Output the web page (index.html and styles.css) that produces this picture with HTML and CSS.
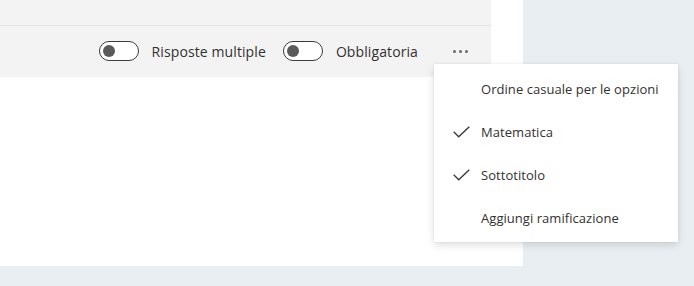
FILE: index.html
```html
<!DOCTYPE html>
<html lang="it">
<head>
  <meta charset="UTF-8">
  <title>Domanda</title>
  <link rel="stylesheet" href="styles.css">
</head>
<body>
<div class="page">
  <div class="card">
    <div class="question">
      <div class="question-top"></div>
      <div class="toolbar">
        <div class="toggle"><span class="toggle-thumb"></span></div>
        <span class="toggle-label">Risposte multiple</span>
        <div class="toggle"><span class="toggle-thumb"></span></div>
        <span class="toggle-label">Obbligatoria</span>
        <button class="more" type="button">
          <span></span><span></span><span></span>
        </button>
      </div>
    </div>
  </div>

  <ul class="menu">
    <li><span class="check"></span>Ordine casuale per le opzioni</li>
    <li>
      <span class="check">
        <svg width="17" height="12" viewBox="0 0 17 12"><polyline points="0.7,5.8 5.7,10.8 16.3,0.7" fill="none" stroke="#3b3b3b" stroke-width="1.4"/></svg>
      </span>Matematica
    </li>
    <li>
      <span class="check">
        <svg width="17" height="12" viewBox="0 0 17 12"><polyline points="0.7,5.8 5.7,10.8 16.3,0.7" fill="none" stroke="#3b3b3b" stroke-width="1.4"/></svg>
      </span>Sottotitolo
    </li>
    <li><span class="check"></span>Aggiungi ramificazione</li>
  </ul>
</div>
</body>
</html>
```

FILE: styles.css
```css
* {
  margin: 0;
  padding: 0;
  box-sizing: border-box;
}
body {
  background-color: #e8eef1;
  font-family: "Open Sans", "Noto Sans", sans-serif;
  font-size: 13px;
  color: #323130;
}
.page {
  position: relative;
  width: 694px;
  height: 286px;
}
.card {
  width: 523px;
  height: 266px;
  background-color: #fff;
}
.question {
  width: 491px;
  background-color: #f3f3f3;
}
.question-top {
  height: 26px;
  border-bottom: 1px solid #e3e3e3;
}
.toolbar {
  height: 51px;
  display: flex;
  align-items: center;
  justify-content: flex-end;
  padding-right: 23px;
  padding-bottom: 1px;
}
.toggle {
  width: 40px;
  height: 20px;
  border: 1px solid #3c3c3c;
  border-radius: 10px;
  display: flex;
  align-items: center;
  padding-left: 3px;
  background-color: #fff;
}
.toggle-thumb {
  width: 12px;
  height: 12px;
  border-radius: 50%;
  background-color: #5a5a5a;
}
.toggle-label {
  margin-left: 13px;
  margin-right: 17px;
  font-size: 14px;
  letter-spacing: 0.1px;
}
.more {
  border: none;
  background: none;
  display: flex;
  gap: 3px;
  margin-left: 18px;
  padding: 4px 0;
}
.more span {
  width: 3px;
  height: 3px;
  border-radius: 50%;
  background-color: #6a6a6a;
}
.menu {
  position: absolute;
  left: 434px;
  top: 64px;
  width: 244px;
  list-style: none;
  background-color: #fff;
  padding: 3px 0;
  box-shadow: 0 3px 8px rgba(0, 0, 0, 0.13), 0 0 2px rgba(0, 0, 0, 0.08);
}
.menu li {
  height: 43px;
  display: flex;
  align-items: center;
  font-size: 13px;
  letter-spacing: 0.05px;
}
.check {
  width: 47px;
  display: flex;
  padding-left: 19px;
}
.check svg {
  display: block;
}
```
